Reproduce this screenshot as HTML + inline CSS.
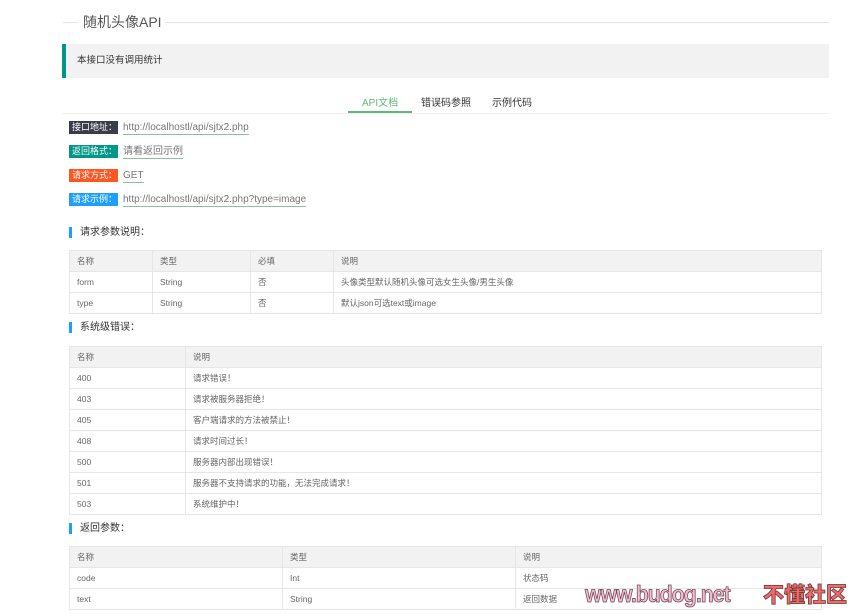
<!DOCTYPE html>
<html><head><meta charset="utf-8"><style>
*{margin:0;padding:0;box-sizing:border-box}
body{width:860px;height:614px;background:#fff;font-family:"Liberation Sans","Noto Sans CJK SC",sans-serif;color:#666;position:relative;overflow:hidden}
.a{position:absolute}
.line{position:absolute;height:1px;background:#e6e6e6}
.lab{position:absolute;left:69px;width:49px;height:13px;color:#fff;font-size:9px;line-height:13px;padding-left:3px}
.lnk{position:absolute;left:123px;font-size:10px;color:#777;line-height:13px;border-bottom:1px solid #8fbf9f}
.h{position:absolute;left:69px;font-size:10px;color:#333;padding-left:8px;border-left:3px solid #1e9fff;line-height:11px}
table{position:absolute;left:69px;width:753px;border-collapse:collapse;font-size:8.5px;color:#666}
td{border:1px solid #e6e6e6;height:21px;padding-left:7px;vertical-align:middle}
tr:first-child td{background:#f2f2f2}
</style></head><body>
<div class="line" style="left:62px;top:22px;width:16px"></div>
<div class="line" style="left:165px;top:22px;width:664px"></div>
<div class="a" style="left:83px;top:14px;font-size:14px;color:#555;line-height:17px">随机头像API</div>
<div class="a" style="left:62px;top:44px;width:767px;height:34px;background:#f2f2f2;border-left:4px solid #009688;font-size:9.5px;color:#333;line-height:34px;padding-left:11px">本接口没有调用统计</div>
<div class="line" style="left:62px;top:113px;width:767px;background:#eee"></div>
<div class="a" style="left:348px;top:111px;width:64px;height:2px;background:#5fb878"></div>
<div class="a" style="left:362px;top:94px;font-size:10px;color:#5fb878">API文档</div>
<div class="a" style="left:421px;top:94px;font-size:10px;color:#333">错误码参照</div>
<div class="a" style="left:492px;top:94px;font-size:10px;color:#333">示例代码</div>
<div class="lab" style="top:121px;background:#393d49">接口地址：</div><div class="lnk" style="top:121px">http://localhostl/api/sjtx2.php</div>
<div class="lab" style="top:145px;background:#009688">返回格式：</div><div class="lnk" style="top:145px">请看返回示例</div>
<div class="lab" style="top:169px;background:#ff5722">请求方式：</div><div class="lnk" style="top:169px">GET</div>
<div class="lab" style="top:193px;background:#1e9fff">请求示例：</div><div class="lnk" style="top:193px">http://localhostl/api/sjtx2.php?type=image</div>
<div class="h" style="top:227px">请求参数说明：</div>
<table style="top:250px"><tr><td style="width:83px">名称</td><td style="width:98px">类型</td><td style="width:83px">必填</td><td>说明</td></tr>
<tr><td>form</td><td>String</td><td>否</td><td>头像类型默认随机头像可选女生头像/男生头像</td></tr>
<tr><td>type</td><td>String</td><td>否</td><td>默认json可选text或image</td></tr></table>
<div class="h" style="top:322px">系统级错误：</div>
<table style="top:346px"><tr><td style="width:116px">名称</td><td>说明</td></tr>
<tr><td>400</td><td>请求错误！</td></tr><tr><td>403</td><td>请求被服务器拒绝！</td></tr><tr><td>405</td><td>客户端请求的方法被禁止！</td></tr><tr><td>408</td><td>请求时间过长！</td></tr><tr><td>500</td><td>服务器内部出现错误！</td></tr><tr><td>501</td><td>服务器不支持请求的功能，无法完成请求！</td></tr><tr><td>503</td><td>系统维护中！</td></tr></table>
<div class="h" style="top:523px">返回参数：</div>
<table style="top:546px"><tr><td style="width:213px">名称</td><td style="width:233px">类型</td><td>说明</td></tr>
<tr><td>code</td><td>Int</td><td>状态码</td></tr><tr><td>text</td><td>String</td><td>返回数据</td></tr></table>
<div class="a" style="left:585px;top:580px;font-size:23px;font-weight:900;color:#f7bad2;-webkit-text-stroke:0.8px #6a4a55;letter-spacing:-1px;line-height:28px;transform:scaleX(0.92);transform-origin:left;font-family:'Liberation Sans',sans-serif">www.budog.net</div>
<div class="a" style="left:763px;top:580px;font-size:21px;font-weight:900;color:#f26a6a;-webkit-text-stroke:0.8px #6a3a3a;line-height:28px;font-family:'Noto Sans CJK SC',sans-serif">不懂社区</div>
</body></html>
